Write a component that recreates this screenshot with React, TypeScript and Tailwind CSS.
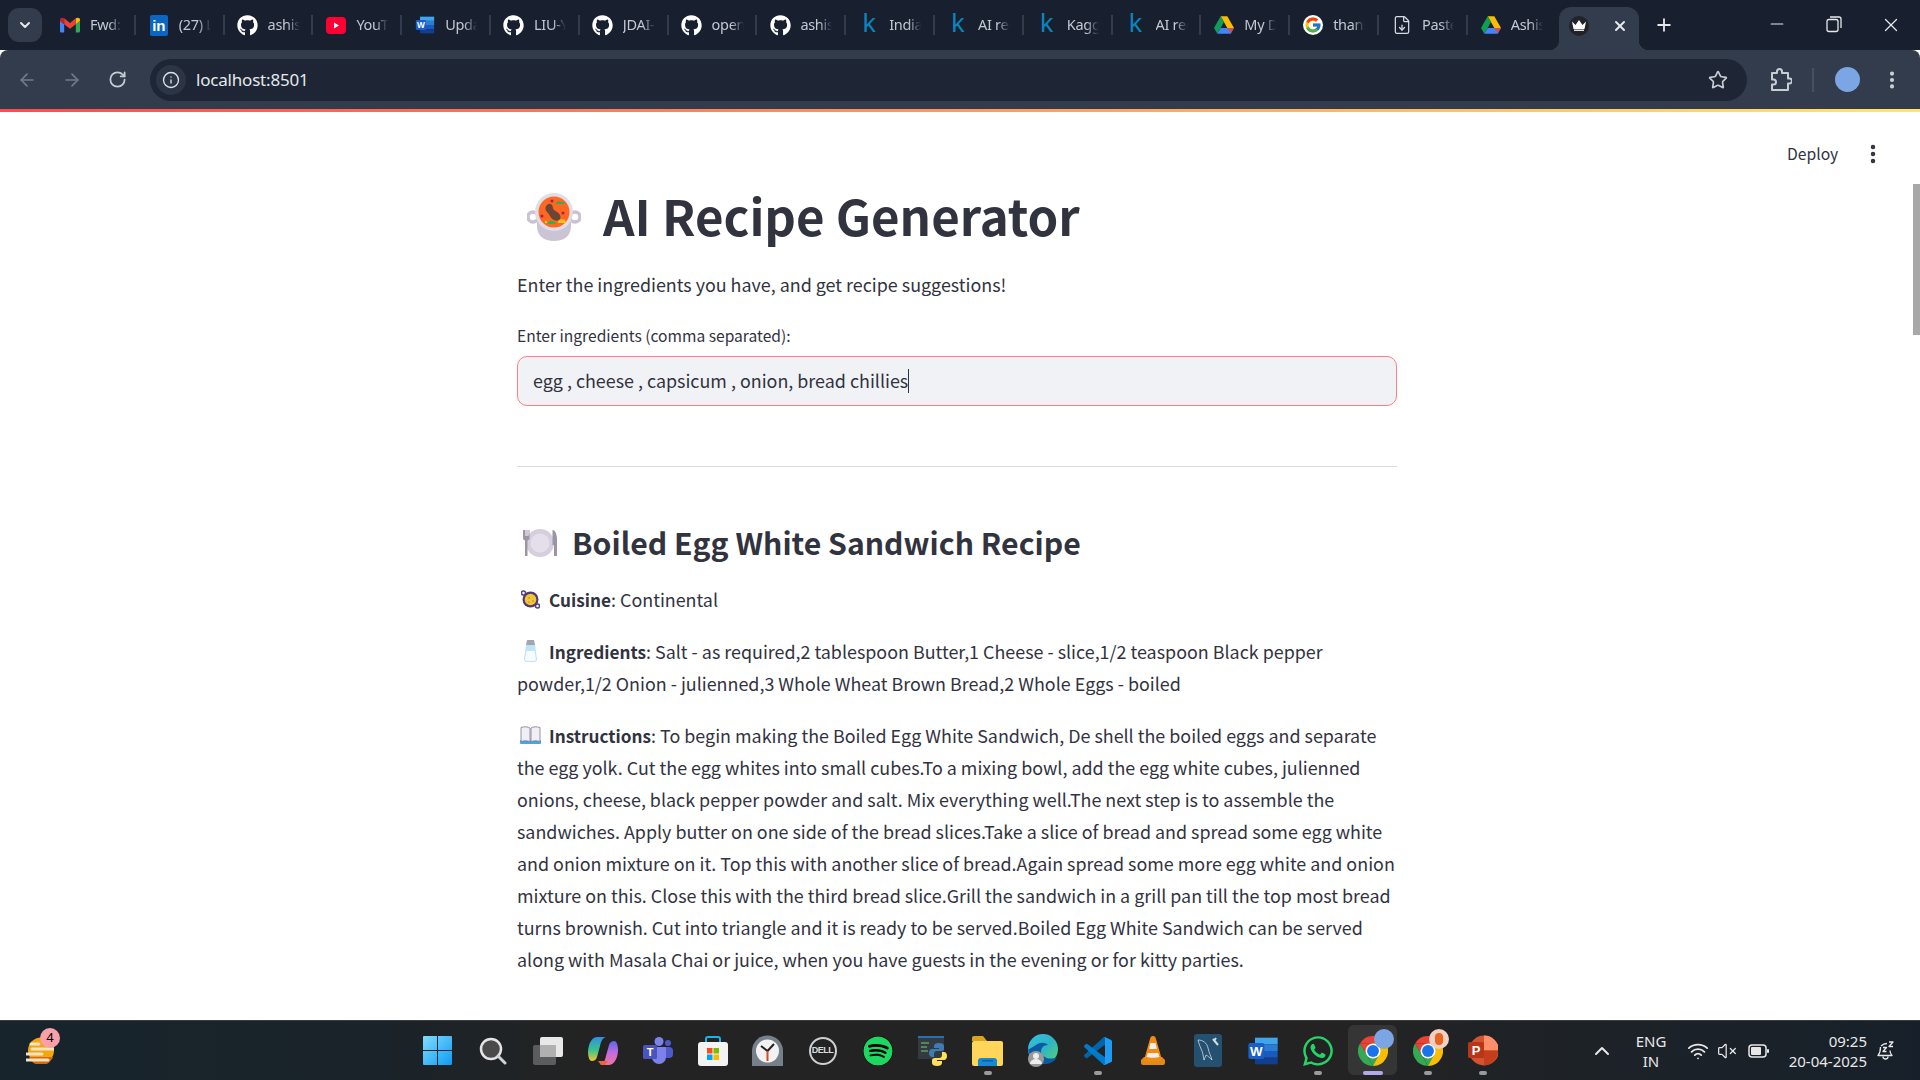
import React from "react";
import { FaGithub, FaSpotify, FaWhatsapp } from "react-icons/fa";
import { FcGoogle } from "react-icons/fc";
import { ArrowLeft, ArrowRight, RotateCw, Info, Star, EllipsisVertical, Plus, X, Minus, ChevronUp, ChevronDown, VolumeX, Wifi, FileDown } from "lucide-react";

const ST = "font-['Noto_Sans_CJK_JP','Source_Sans_3',sans-serif]";
const UI = "font-['Noto_Sans','Open_Sans',sans-serif]";

const Gmail = () => (
  <svg width="20" height="16" viewBox="0 0 24 18">
    <path d="M1 18h4V8L0 4v12a2 2 0 0 0 1 2z" fill="#4285f4" />
    <path d="M19 18h4a2 2 0 0 0 1-2V4l-5 4z" fill="#34a853" />
    <path d="M19 1v7l5-4V2.500C24 .5 21 -.5 19 1z" fill="#fbbc04" />
    <path d="M5 8V1l7 5.500L19 1v7l-7 5.500z" fill="#ea4335" />
    <path d="M0 2.500V4l5 4V1C3-.5 0 .5 0 2.500z" fill="#c5221f" />
  </svg>
);
const LinkedIn = () => (
  <span className="w-[18px] h-[21px] bg-[#0a66c2] rounded-[2px] flex items-center justify-center text-white font-bold text-[15px] leading-none font-['Liberation_Sans',sans-serif]">in</span>
);
const Yt = () => (
  <svg width="20" height="17" viewBox="0 0 20 17"><rect width="20" height="17" rx="4" fill="#ff0033" /><path d="M8 5.500 13 8.500 8 11.500z" fill="#fff" /></svg>
);
const WordIcon = ({ s = 20 }: { s?: number }) => (
  <svg width={s} height={s} viewBox="0 0 24 24">
    <rect x="6" y="2" width="17" height="5" fill="#41a5ee" /><rect x="6" y="7" width="17" height="5" fill="#2b7cd3" />
    <rect x="6" y="12" width="17" height="5" fill="#185abd" /><rect x="6" y="17" width="17" height="5" fill="#103f91" />
    <rect x="1" y="6" width="12" height="12" rx="1.500" fill="#1a5fc4" />
    <text x="7" y="15.500" fontSize="10" fontWeight="700" fill="#fff" textAnchor="middle" fontFamily="Liberation Sans">W</text>
  </svg>
);
const Drive = () => (
  <svg width="20" height="18" viewBox="0 0 24 21">
    <path d="M8 0h8l8 14h-8z" fill="#fbbc04" /><path d="M8 0l4 7-8 14-4-7z" fill="#0f9d58" />
    <path d="M4 21l4-7h16l-4 7z" fill="#4285f4" /><path d="M16 14h8l-4 7z" fill="#ea4335" opacity=".8" />
  </svg>
);
const K = () => <span className="font-['Liberation_Sans',sans-serif] text-[26px] leading-none text-[#0b85bd] -mt-1">k</span>;
const G = () => <span className="w-5 h-5 rounded-full bg-white flex items-center justify-center"><FcGoogle size={18} /></span>;
const Crown = () => (
  <span className="w-5 h-[20px] rounded-full bg-[#232227] flex items-center justify-center">
    <svg width="14" height="11" viewBox="0 0 14 11"><path d="M0 1.500 3.500 5 7 0l3.500 5L14 1.500 12.500 9h-11z" fill="#fff" /><rect x="2" y="9.500" width="10" height="1.500" fill="#ddd" /></svg>
  </span>
);
const Gh = () => <FaGithub size={21} color="#fff" />;

const tabs: [React.ReactNode, string][] = [
  [<Gmail />, "Fwd: Re"], [<LinkedIn />, "(27) Lin"], [<Gh />, "ashish"], [<Yt />, "YouTube"], [<WordIcon />, "Update"],
  [<Gh />, "LIU-Yu"], [<Gh />, "JDAI-C"], [<Gh />, "open-w"], [<Gh />, "ashish"], [<K />, "India F"], [<K />, "AI reci"],
  [<K />, "Kaggle"], [<K />, "AI reci"], [<Drive />, "My Dri"], [<G />, "thanks"], [<FileDown size={20} color="#d7dbe1" strokeWidth={1.500} />, "Pastebi"], [<Drive />, "Ashish"],
];

const Tab = ({ icon, label, last }: { icon: React.ReactNode; label: string; last?: boolean }) => (
  <div className="relative flex items-center w-[88.800px] h-full shrink-0">
    <span className="w-[43px] pl-[3px] flex items-center justify-center shrink-0">{icon}</span>
    <span className={`${UI} w-[32px] overflow-hidden whitespace-nowrap text-[14.500px] tracking-[-0.3px] text-[#c3c8d1] [mask-image:linear-gradient(90deg,#000_60%,transparent)]`}>{label}</span>
    {!last && <span className="absolute right-0 top-[15px] w-[2px] h-[20px] bg-[#333c4d]" />}
  </div>
);

const Pot = () => (
  <svg width="54" height="50" viewBox="0 0 54 50">
    <circle cx="6" cy="25" r="5" fill="none" stroke="#c9c2d2" strokeWidth="3.500" />
    <circle cx="48" cy="25" r="5" fill="none" stroke="#c9c2d2" strokeWidth="3.500" />
    <path d="M10 22h34v12c0 10-7 15-17 15S10 44 10 34z" fill="#cbc4d4" />
    <circle cx="27" cy="20" r="19" fill="#e1dce6" />
    <circle cx="27" cy="20" r="15.500" fill="#ff6723" />
    <path d="M20 13c3-3 6 0 6 3s5 3 7 7-2 7-6 5-4-5-6-7-4-5-1-8z" fill="#6d4534" />
    <path d="M28 12q3-4 6-2 3-1 4 2z" fill="#2bb24c" /><path d="M20 32q2-4 5-3 3 0 4 3z" fill="#2bb24c" />
    <path d="M31 29q3-3 7-1l1 3h-8z" fill="#fcc21b" />
    <circle cx="36" cy="21" r="1.500" fill="#a5243c" /><circle cx="25" cy="9" r="1.500" fill="#a5243c" /><circle cx="15" cy="24" r="1.500" fill="#a5243c" /><circle cx="19" cy="30" r="1.300" fill="#fcc21b" />
  </svg>
);
const Plate = () => (
  <svg width="36" height="28" viewBox="0 0 36 28">
    <circle cx="18" cy="14" r="14" fill="#d5cfdd" /><circle cx="18" cy="14" r="9.500" fill="#e4dfea" />
    <path d="M1 1v8c0 1.500 1 2 2 2.500V27h2.500V11.500c1-.5 2-1 2-2.500V1H6.500v6h-1V1h-1v6h-1V1z" fill="#9b95a5" />
    <path d="M30.500 1c3 0 4.500 5 4.500 9v17h-3V16h-1.500z" fill="#9b95a5" />
  </svg>
);
const Pan = () => (
  <svg width="19" height="19" viewBox="0 0 19 19">
    <circle cx="2.500" cy="3" r="2" fill="none" stroke="#5b3f85" strokeWidth="1.500" /><circle cx="16.500" cy="16" r="2" fill="none" stroke="#5b3f85" strokeWidth="1.500" />
    <circle cx="9.500" cy="9.500" r="8" fill="#4f3b72" /><circle cx="9.500" cy="9.500" r="5.800" fill="#f4c534" />
    <circle cx="8" cy="8" r=".8" fill="#7aa13a" /><circle cx="12" cy="11" r=".8" fill="#7aa13a" /><circle cx="8" cy="12" r=".7" fill="#e0762c" />
  </svg>
);
const Salt = () => (
  <svg width="13" height="22" viewBox="0 0 13 22">
    <path d="M3 0h7l1 5H2z" fill="#a5a5ad" />
    <path d="M2 5h9l2 14a3 3 0 0 1-3 3H3a3 3 0 0 1-3-3z" fill="#bfe3f7" />
    <path d="M2.500 11h8l1.500 8a2 2 0 0 1-2 2H3a2 2 0 0 1-2-2z" fill="#f7fbfe" />
  </svg>
);
const Book = () => (
  <svg width="21" height="18" viewBox="0 0 21 18">
    <rect y="14" width="21" height="4" rx="1" fill="#3fa9e6" />
    <path d="M1 1.500C4 .5 8 .5 10 2v14c-2-1.500-6-1.500-9-.5z" fill="#f1eef5" stroke="#7f7890" strokeWidth=".8" />
    <path d="M20 1.500C17 .5 13 .5 11 2v14c2-1.500 6-1.500 9-.5z" fill="#f1eef5" stroke="#7f7890" strokeWidth=".8" />
  </svg>
);

/* taskbar icons */
const Win = () => (
  <svg width="29" height="29" viewBox="0 0 29 29">
    <defs><linearGradient id="w" x1="0" y1="0" x2="1" y2="1"><stop offset="0" stopColor="#7fdcfb" /><stop offset="1" stopColor="#0f9bf5" /></linearGradient></defs>
    <path d="M0 1a1 1 0 0 1 1-1h13v14H0zM15 0h13a1 1 0 0 1 1 1v13H15zM0 15h14v14H1a1 1 0 0 1-1-1zM15 15h14v13a1 1 0 0 1-1 1H15z" fill="url(#w)" />
  </svg>
);
const Search = () => (
  <svg width="28" height="28" viewBox="0 0 28 28"><circle cx="12" cy="12" r="10" fill="#4a4a4a" stroke="#e4e4e4" strokeWidth="2.500" /><path d="M19 19l7 7" stroke="#d0d0d0" strokeWidth="3" strokeLinecap="round" /></svg>
);
const TaskView = () => (
  <svg width="30" height="28" viewBox="0 0 30 28"><rect x="0" y="8" width="23" height="20" rx="2" fill="#5c5c5c" /><rect x="7" y="0" width="23" height="20" rx="2" fill="#e8e8e8" /><rect x="7" y="8" width="16" height="12" fill="#b0b0b0" /></svg>
);
const Copilot = () => (
  <svg width="30" height="28" viewBox="0 0 30 28">
    <defs>
      <linearGradient id="c1" x1="0" y1="0" x2="0" y2="1"><stop offset="0" stopColor="#2f8ee8" /><stop offset=".55" stopColor="#3bc48c" /><stop offset="1" stopColor="#f3c52f" /></linearGradient>
      <linearGradient id="c2" x1="0" y1="0" x2="0" y2="1"><stop offset="0" stopColor="#5a67e8" /><stop offset=".5" stopColor="#c46de0" /><stop offset="1" stopColor="#f3729e" /></linearGradient>
    </defs>
    <path d="M9 0h9c-4 1-5 5-6 9l-3 11c-1 3-3 4-5 4C1 24 0 19 0 15 0 9 3 0 9 0z" fill="url(#c1)" />
    <path d="M21 28h-9c4-1 5-5 6-9l3-11c1-3 3-4 5-4 3 0 4 5 4 9 0 6-3 15-9 15z" fill="url(#c2)" />
    <path d="M10 24h10l-3 4h-4z" fill="#f0643c" />
  </svg>
);
const Teams = () => (
  <svg width="30" height="28" viewBox="0 0 30 28">
    <circle cx="25" cy="6" r="3" fill="#5059c9" /><rect x="20" y="10" width="10" height="11" rx="4" fill="#5059c9" />
    <circle cx="16" cy="4.500" r="4.500" fill="#7b83eb" /><path d="M9 10h14v10a7 7 0 0 1-14 0z" fill="#7b83eb" />
    <rect x="0" y="8" width="14" height="14" rx="1.500" fill="#4b53bc" />
    <text x="7" y="19" fontSize="11" fontWeight="700" fill="#fff" textAnchor="middle" fontFamily="Liberation Sans">T</text>
  </svg>
);
const Store = () => (
  <svg width="30" height="30" viewBox="0 0 30 30">
    <path d="M8 8V3a2 2 0 0 1 2-2h10a2 2 0 0 1 2 2v5" fill="none" stroke="#1eb1ec" strokeWidth="2" />
    <rect y="6" width="30" height="24" rx="3" fill="#f3f3f3" />
    <rect x="9" y="12" width="5.500" height="5.500" fill="#f25022" /><rect x="15.500" y="12" width="5.500" height="5.500" fill="#7fba00" />
    <rect x="9" y="18.500" width="5.500" height="5.500" fill="#00a4ef" /><rect x="15.500" y="18.500" width="5.500" height="5.500" fill="#ffb900" />
  </svg>
);
const Clock = () => (
  <svg width="31" height="31" viewBox="0 0 31 31">
    <path d="M0 16a15.500 15.500 0 0 1 31 0v15H0z" fill="#76808a" /><circle cx="15.500" cy="16" r="11.500" fill="#f2f2f2" />
    <path d="M15.500 16 9 11M15.500 16 22 9" stroke="#222" strokeWidth="2" /><path d="M15.500 16v10" stroke="#d9472b" strokeWidth="2" />
  </svg>
);
const Dell = () => (
  <span className="w-7 h-7 rounded-full border-2 border-[#cfcfcf] flex items-center justify-center font-['Liberation_Sans',sans-serif] font-bold text-[9px] text-[#dcdcdc] tracking-tighter">DELL</span>
);
const Python = () => (
  <svg width="30" height="30" viewBox="0 0 30 30">
    <rect y="0" width="26" height="23" fill="#343a42" /><rect y="0" width="26" height="2" fill="#2a6fb0" />
    <path d="M3 7h8M3 11h6M3 15h7" stroke="#59a45a" strokeWidth="1.300" />
    <path d="M19 7c-3 0-5 1-5 3v2h5v1h-7c-2 0-3 2-3 4s1 4 3 4h2v-3c0-2 1-3 3-3h4c2 0 3-1 3-2v-3c0-2-2-3-5-3z" fill="#3f7cb6" transform="translate(2 0)" />
    <path d="M19 30c3 0 5-1 5-3v-2h-5v-1h7c2 0 3-2 3-4s-1-4-3-4h-2v3c0 2-1 3-3 3h-4c-2 0-3 1-3 2v3c0 2 2 3 5 3z" fill="#ffe05b" />
  </svg>
);
const Folder = () => (
  <svg width="31" height="31" viewBox="0 0 31 31">
    <path d="M0 3a2 2 0 0 1 2-2h9l4 5H0z" fill="#d9a520" /><rect y="6" width="31" height="25" rx="2" fill="#ffd65a" />
    <path d="M6 27a3 3 0 0 1 3-4h13a3 3 0 0 1 3 4v4H6z" fill="#1788d3" /><rect x="10" y="25" width="11" height="1.500" fill="#0c5e9d" />
  </svg>
);
const Edge = () => (
  <span className="relative w-[30px] h-[33px] block">
    <svg width="30" height="33" viewBox="0 0 30 33">
      <defs><linearGradient id="e" x1="0" y1="0" x2="1" y2="1"><stop offset="0" stopColor="#35c1e1" /><stop offset=".5" stopColor="#2fb3c8" /><stop offset="1" stopColor="#57d56c" /></linearGradient></defs>
      <circle cx="15" cy="15" r="15" fill="url(#e)" />
      <path d="M0 15C2 24 8 30 17 30c6 0 10-3 12-7-4 2-9 2-12 0-4-2-5-6-3-9 1-2 3-3 6-3-3-3-8-3-12 0-4 2-7 5-8 4z" fill="#0c59a4" />
      <circle cx="8" cy="25" r="8" fill="#9a9a9a" /><circle cx="8" cy="22" r="3" fill="#eee" /><path d="M2 30a6 5 0 0 1 12 0z" fill="#eee" />
    </svg>
  </span>
);
const VSCode = () => (
  <svg width="32" height="32" viewBox="0 0 32 32">
    <path d="M29.010 5.030 23.244 2.254a1.742 1.742 0 0 0-1.989.338L2.380 19.800a1.166 1.166 0 0 0-.08 1.647c.02.022.04.043.06.063l1.541 1.400a1.165 1.165 0 0 0 1.489.066L28.142 5.750A1.158 1.158 0 0 1 30 6.672v-.067a1.748 1.748 0 0 0-.990-1.575Z" fill="#0065a9" />
    <path d="M29.010 26.970l-5.766 2.777a1.745 1.745 0 0 1-1.989-.338L2.380 12.200a1.166 1.166 0 0 1-.08-1.647c.02-.022.04-.043.06-.063l1.541-1.400A1.165 1.165 0 0 1 5.390 9.024L28.142 26.250A1.158 1.158 0 0 0 30 25.328V25.400a1.749 1.749 0 0 1-.990 1.570Z" fill="#007acc" />
    <path d="M23.244 29.747a1.745 1.745 0 0 1-1.989-.338A1.025 1.025 0 0 0 23 28.684V3.316a1.024 1.024 0 0 0-1.749-.724 1.744 1.744 0 0 1 1.989-.339l5.765 2.772A1.748 1.748 0 0 1 30 6.600V25.400a1.748 1.748 0 0 1-.991 1.576Z" fill="#1f9cf0" />
  </svg>
);
const Vlc = () => (
  <svg width="26" height="29" viewBox="0 0 26 29">
    <path d="M1 24l3-3h18l3 3v3a2 2 0 0 1-2 2H3a2 2 0 0 1-2-2z" fill="#e38a12" />
    <path d="M13 0c2 0 2.500 1 3 3l6 21c-4 2-14 2-18 0l6-21c.5-2 1-3 3-3z" fill="#f48b0e" />
    <path d="M10.500 7h5l1.500 6H9zM7.800 17h10.400l1.300 4c-3 1-10 1-13 0z" fill="#eee" />
  </svg>
);
const Workbench = () => (
  <span className="w-[28px] h-[33px] rounded-[3px] bg-[#25506f] flex items-center justify-center">
    <svg width="24" height="28" viewBox="0 0 24 28" fill="none" stroke="#cfdde6" strokeWidth=".8">
      <path d="M2 3c5 0 9 3 10 8s3 8 4 12c-3-3-4-4-6-5l-2 5c-1-4-1-7-2-9S3 7 2 3z" /><path d="M17 2l5 6M20 1l-2 3" strokeWidth="2" />
    </svg>
  </span>
);
const Chrome = () => (
  <svg width="30" height="30" viewBox="0 0 48 48">
    <path d="M3.200 12A24 24 0 0 1 44.800 12L24 12z" fill="#ea4335" />
    <path d="M44.800 12A24 24 0 0 1 24 48L24 36z" fill="#fbbc04" />
    <path d="M24 48A24 24 0 0 1 3.200 12L14 30z" fill="#34a853" />
    <path d="M24 12H44.800L34 30z" fill="#fbbc04" /><path d="M24 12H3.200L14 30z" fill="#ea4335" /><path d="M14 30 34 30 24 48z" fill="#34a853" />
    <circle cx="24" cy="24" r="12" fill="#fff" /><circle cx="24" cy="24" r="9.500" fill="#1a73e8" />
  </svg>
);
const Ppt = () => (
  <svg width="30" height="31" viewBox="0 0 30 31">
    <circle cx="16" cy="15.500" r="15" fill="#d35230" /><path d="M16 .5a15 15 0 0 1 15 15H16z" fill="#ff8f6b" /><path d="M16 15.500h14a15 15 0 0 1-14 15z" fill="#c43e1c" />
    <rect y="7" width="16" height="16" rx="1.500" fill="#b7361a" />
    <text x="8" y="20" fontSize="13" fontWeight="700" fill="#fff" textAnchor="middle" fontFamily="Liberation Sans">P</text>
  </svg>
);
const Whats = () => <FaWhatsapp size={34} color="#25d366" />;
const ExtPuzzle = () => (
  <svg width="22" height="24" viewBox="0 0 22 24" fill="none" stroke="#c8ccd3" strokeWidth="2" strokeLinejoin="round">
    <path d="M2 5h5V3.500a2.500 2.500 0 0 1 5 0V5h6v5.500h1.500a2.500 2.500 0 0 1 0 5H18V22H2v-5.500h1.500a2.500 2.500 0 0 0 0-5H2z" />
  </svg>
);
const BellZ = () => (
  <svg width="18" height="20" viewBox="0 0 18 20" fill="none" stroke="#e8e8e8" strokeWidth="1.300" strokeLinejoin="round">
    <path d="M4 5c2-2 5-2.500 6-2.500M3.500 6C3.500 10 3 12 1 14.500h14c-1.500-1.500-2-3-2-5" />
    <path d="M6 15.500a2.500 2.500 0 0 0 5 0" />
    <path d="M6 6.500h3.500L6 10.500h3.500M12 1h4l-4 4.500h4" />
  </svg>
);

const Dot = ({ active }: { active?: boolean }) => (
  <span className={`absolute bottom-[5px] left-1/2 -translate-x-1/2 h-1 rounded-full ${active ? "w-5 bg-[#b5a8e6]" : "w-2 bg-[#9a9a9a]"}`} />
);

const taskIcons: { el: React.ReactNode; dot?: boolean; active?: boolean }[] = [
  { el: <Win /> }, { el: <Search /> }, { el: <TaskView /> }, { el: <Copilot /> }, { el: <Teams /> }, { el: <Store /> }, { el: <Clock /> },
  { el: <Dell /> }, { el: <FaSpotify size={30} color="#1ed760" className="bg-black rounded-full" /> }, { el: <Python /> }, { el: <Folder />, dot: true }, { el: <Edge /> },
  { el: <VSCode />, dot: true }, { el: <Vlc /> }, { el: <Workbench /> }, { el: <WordIcon s={32} /> }, { el: <Whats />, dot: true },
  { el: <span className="relative block w-[30px] h-[30px]"><Chrome /><span className="absolute -top-[7px] -right-[6px] w-[20px] h-[20px] rounded-full bg-[#7ba6e3]" /></span>, dot: true, active: true },
  { el: <span className="relative block w-[30px] h-[30px]"><Chrome /><span className="absolute -top-[7px] -right-[6px] w-[20px] h-[20px] rounded-full bg-[#f6cfc4] flex items-center justify-center"><span className="w-2 h-3 bg-[#e8641f] rounded-sm" /></span></span>, dot: true },
  { el: <Ppt />, dot: true },
];

const lines = [
  "To begin making the Boiled Egg White Sandwich, De shell the boiled eggs and separate",
  "the egg yolk. Cut the egg whites into small cubes.To a mixing bowl, add the egg white cubes, julienned",
  "onions, cheese, black pepper powder and salt. Mix everything well.The next step is to assemble the",
  "sandwiches. Apply butter on one side of the bread slices.Take a slice of bread and spread some egg white",
  "and onion mixture on it. Top this with another slice of bread.Again spread some more egg white and onion",
  "mixture on this. Close this with the third bread slice.Grill the sandwich in a grill pan till the top most bread",
  "turns brownish. Cut into triangle and it is ready to be served.Boiled Egg White Sandwich can be served",
  "along with Masala Chai or juice, when you have guests in the evening or for kitty parties.",
];

const Lead = ({ children }: { children: React.ReactNode }) => (
  <span className="inline-flex w-[32px] h-[32px] items-center justify-center pr-[5px] shrink-0">{children}</span>
);
const B = ({ children }: { children: React.ReactNode }) => <b className="font-bold text-[17.200px] leading-none">{children}</b>;

export default function App() {
  return (
    <div className="w-[1920px] h-[1080px] flex flex-col overflow-hidden bg-white">
      {/* tab strip */}
      <div className="h-[50px] bg-[#182030] flex items-stretch shrink-0">
        <div className="w-[47px] flex items-center pl-2 shrink-0">
          <span className="w-[34px] h-[34px] rounded-[11px] bg-[#333c4d] flex items-center justify-center"><ChevronDown size={16} color="#e6e8ec" strokeWidth={3} /></span>
        </div>
        {tabs.map(([icon, label], i) => <Tab key={i} icon={icon} label={label} last={i === tabs.length - 1} />)}
        <div className="relative w-[80px] ml-[2px] mt-[7px] h-[43px] rounded-t-[12px] bg-[#333c4d] flex items-center justify-between pl-[10px] pr-[11px] pb-[6px] shrink-0">
          <Crown />
          <X size={16} color="#e6e8ec" strokeWidth={3} />
          <span className="absolute -left-[10px] bottom-0 w-[10px] h-[10px] bg-[radial-gradient(circle_at_0_0,#182030_10px,#333c4d_10.500px)]" />
          <span className="absolute -right-[10px] bottom-0 w-[10px] h-[10px] bg-[radial-gradient(circle_at_100%_0,#182030_10px,#333c4d_10.500px)]" />
        </div>
        <div className="w-[50px] flex items-center justify-center shrink-0"><Plus size={20} color="#e6e8ec" strokeWidth={2.200} /></div>
        <div className="flex-1 flex items-start justify-end pt-[14px] pr-[18px] gap-[36.500px] text-[#e6e8ec]">
          <Minus size={20} strokeWidth={1.300} />
          <svg width="20" height="20" viewBox="0 0 20 20" fill="none" stroke="currentColor" strokeWidth="1.300"><rect x="3" y="5.500" width="11" height="12" rx="2" /><path d="M6 3h9a2 2 0 0 1 2 2v9" /></svg>
          <X size={22} strokeWidth={1.300} />
        </div>
      </div>
      {/* toolbar */}
      <div className="h-[59px] bg-[#333c4d] rounded-t-[8px] flex items-center shrink-0">
        <div className="w-[150px] flex items-center pl-[17px] gap-[25px] shrink-0">
          <ArrowLeft size={20} color="#747b88" strokeWidth={2} />
          <ArrowRight size={20} color="#747b88" strokeWidth={2} />
          <RotateCw size={19} color="#c8ccd3" strokeWidth={2.200} className="ml-[1px]" />
        </div>
        <div className="w-[1597px] h-[42px] rounded-full bg-[#1e2636] flex items-center pl-[6px] pr-[19px] shrink-0">
          <span className="w-[30px] h-[30px] rounded-full bg-[#2c3546] flex items-center justify-center"><Info size={18} color="#dfe2e7" strokeWidth={1.800} /></span>
          <span className={`${UI} ml-[10px] text-[17px] tracking-[-0.2px] text-[#e5e8ec]`}>localhost:8501</span>
          <Star size={20} color="#c8ccd3" strokeWidth={2} className="ml-auto" />
        </div>
        <div className="flex-1 flex items-center pl-[23px]">
          <ExtPuzzle />
          <span className="ml-[20px] w-[2px] h-[24px] bg-[#475063]" />
          <span className="ml-[21px] w-[25px] h-[25px] rounded-full bg-[#7ba6e3]" />
          <EllipsisVertical size={22} color="#d0d3d9" strokeWidth={2.500} className="ml-[21px]" />
        </div>
      </div>
      {/* streamlit accent */}
      <div className="h-[3px] shrink-0 bg-[linear-gradient(90deg,#ff4b4b,#ffe66f)]" />

      {/* page */}
      <div className={`relative flex-1 bg-white text-[#31333f] overflow-hidden ${ST}`}>
        <div className="absolute top-[30px] left-[1787px] flex items-center">
          <span className="text-[15.700px] leading-6">Deploy</span>
          <EllipsisVertical size={24} color="#31333f" strokeWidth={2.500} className="ml-[23px]" />
        </div>
        <div className="absolute right-0 top-[72px] w-[7px] h-[151px] bg-[#a8a8a8]" />

        <div className="w-[880px] ml-[517px] pt-[70px]">
          <div className="flex items-center h-[66px]">
            <span className="ml-[10px] w-[54px] flex mt-[4px]"><Pot /></span>
            <h1 className="ml-[22px] text-[49.200px] leading-[66px] font-bold whitespace-nowrap">AI Recipe Generator</h1>
          </div>
          <p className="mt-[20px] text-[17.900px] leading-8">Enter the ingredients you have, and get recipe suggestions!</p>
          <p className="mt-[23px] text-[15.600px] leading-6">Enter ingredients (comma separated):</p>
          <div className="mt-[9px] h-[50px] rounded-[10px] border border-[#ff7f7f] bg-[#f0f2f6] flex items-center pl-[15px] text-[17.900px]">
            <span className="whitespace-nowrap pb-[2px]">egg , cheese , capsicum , onion, bread chillies</span>
            <span className="w-px h-[24px] bg-[#31333f]" />
          </div>
          <div className="mt-[60px] h-px bg-[#d9dadd]" />
          <div className="mt-[51px] flex items-center h-[50px]">
            <span className="ml-[5px] w-[36px] flex"><Plate /></span>
            <h2 className="ml-[14px] pb-[2px] text-[30.200px] leading-[50px] font-bold whitespace-nowrap">Boiled Egg White Sandwich Recipe</h2>
          </div>
          <div className="mt-[15px] text-[17.900px] leading-8 whitespace-nowrap">
            <p className="flex h-8"><Lead><Pan /></Lead><span><B>Cuisine</B>: Continental</span></p>
            <p className="mt-5 flex h-8"><Lead><Salt /></Lead><span><B>Ingredients</B>: Salt - as required,2 tablespoon Butter,1 Cheese - slice,1/2 teaspoon Black pepper</span></p>
            <p className="h-8">powder,1/2 Onion - julienned,3 Whole Wheat Brown Bread,2 Whole Eggs - boiled</p>
            <p className="mt-5 flex h-8"><Lead><Book /></Lead><span><B>Instructions</B>: {lines[0]}</span></p>
            {lines.slice(1).map((l) => <p key={l} className="h-8">{l}</p>)}
          </div>
        </div>
      </div>

      {/* taskbar */}
      <div className="h-[60px] shrink-0 border-t border-[#3a3c3e] flex items-center bg-[linear-gradient(90deg,#17242c_0%,#1a2329_20%,#232323_30%,#232323_70%,#1c2228_85%,#17202a_100%)] relative">
        <div className="w-[410px] pl-[26px] shrink-0">
          <span className="relative block w-[28px] h-[27px]">
            <svg width="28" height="27" viewBox="0 0 28 27">
              <circle cx="15" cy="13.500" r="13" fill="#f5a70a" /><path d="M3 20h24a13 13 0 0 1-24 0z" fill="#d9670b" />
              <path d="M5 7h8M6 12h22M0 17h16M0 23h22" stroke="#f4e3c5" strokeWidth="3" strokeLinecap="round" />
            </svg>
            <span className="absolute -top-[9px] left-[14px] w-5 h-5 rounded-full bg-[#f9a0a8] flex items-center justify-center text-[13px] text-black font-['Noto_Sans',sans-serif]">4</span>
          </span>
        </div>
        <div className="flex shrink-0">
          {taskIcons.map((t, i) => (
            <div key={i} className="relative w-[55px] h-[59px] flex items-center justify-center">
              {t.active && <span className="absolute left-[3px] top-[4px] w-[49px] h-[50px] rounded-[6px] bg-[#353535]" />}
              <span className="relative flex">{t.el}</span>
              {t.dot && <Dot active={t.active} />}
            </div>
          ))}
        </div>
        <div className="flex-1 flex items-center text-[#e8e8e8] text-[15px] leading-[20px] font-['Noto_Sans',sans-serif]">
          <ChevronUp size={24} strokeWidth={2} className="ml-[80px]" />
          <div className="ml-[20px] text-center w-[34px]"><div>ENG</div><div>IN</div></div>
          <Wifi size={22} strokeWidth={2} className="ml-[19px]" />
          <VolumeX size={20} strokeWidth={1.500} className="ml-[8px]" />
          <svg className="ml-[11px]" width="21" height="14" viewBox="0 0 21 14"><rect x="1" y="1" width="17" height="12" rx="3" fill="none" stroke="#e8e8e8" strokeWidth="1.500" /><rect x="3" y="3" width="10" height="8" rx="1" fill="#e8e8e8" /><rect x="19" y="5" width="2" height="4" rx="1" fill="#e8e8e8" /></svg>
          <div className="ml-[20px] w-[78px] text-right whitespace-nowrap flex flex-col items-end"><div>09:25</div><div>20-04-2025</div></div>
          <span className="ml-[10px] flex"><BellZ /></span>
        </div>
      </div>
    </div>
  );
}
